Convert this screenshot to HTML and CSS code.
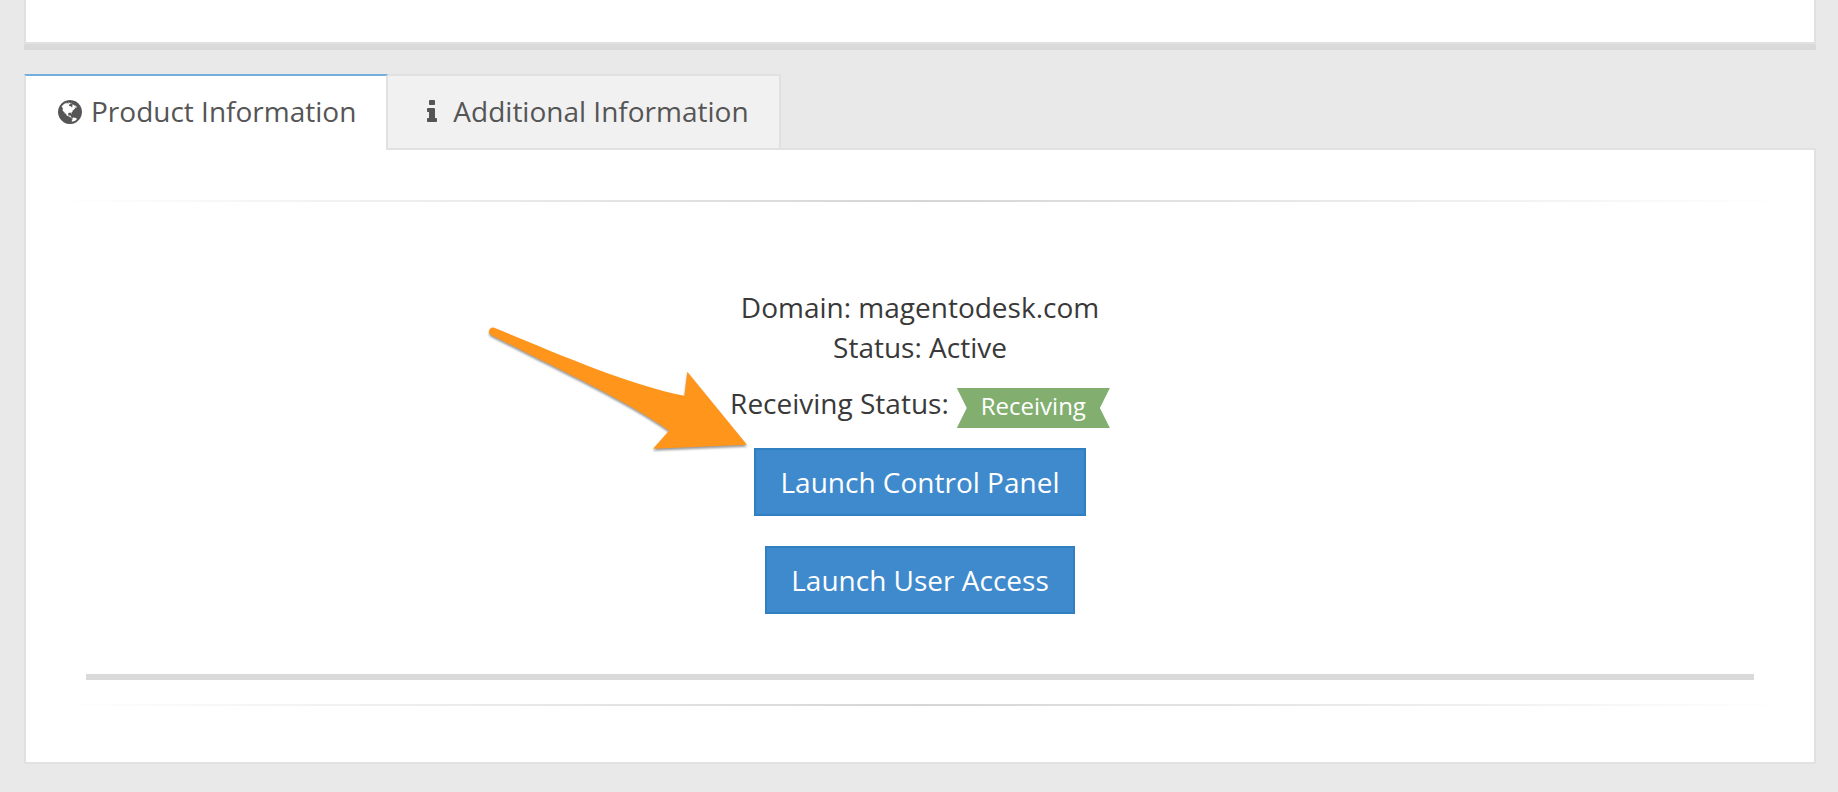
FILE: index.html
```html
<!DOCTYPE html>
<html lang="en">
<head>
<meta charset="utf-8">
<meta name="viewport" content="width=device-width, initial-scale=1">
<title>Product Information</title>
<link rel="stylesheet" href="styles.css">
</head>
<body>
<main class="page">
  <section class="summary-panel" aria-label="Summary"></section>

  <div class="tabs" role="tablist">
    <button class="tab tab-active" id="tab-product" type="button" role="tab" aria-selected="true" aria-controls="product">
      <svg class="icon icon-globe" viewBox="128 128 1536 1536" aria-hidden="true"><path d="M896 128q209 0 385.500 103t279.500 279.500 103 385.500-103 385.500-279.500 279.500-385.500 103-385.500-103-279.500-279.500-103-385.500 103-385.500 279.500-279.500 385.500-103zm274 521q-2 1-9.500 9.500t-13.500 9.500q2 0 4.500-5t5-11 3.500-7q6-7 22-15 14-6 52-12 34-8 51 11-2-2 9.500-13t14.500-12q3-2 15-4.500t15-7.500l2-22q-12 1-17.500-7t-6.500-21q0 2-6 8 0-7-4.500-8t-11.500 1-9 1q-10-3-15-7.500t-8-16.500-4-15q-2-5-9.500-11t-9.500-10q-1-2-2.500-5.500t-3-6.500-4-5.500-5.500-2.500-7 5-7.500 10-4.500 5q-3-2-6-1.500t-4.500 1-4.500 3-5 3.500q-3 2-8.500 3t-8.500 2q15-5-1-11-10-4-16-3 9-4 7.500-12t-8.500-14h5q-1-4-8.500-8.500t-17.500-8.500-13-6q-8-5-34-9.500t-33-.5q-5 6-4.500 10.500t4 14 3.500 12.500q1 6-5.500 13t-6.500 12q0 7 14 15.500t10 21.500q-3 8-16 16t-16 12q-5 8-1.500 18.500t10.500 16.500q2 2 1.500 4t-3.500 4.500-5.500 4-6.500 3.500l-3 2q-11 5-20.500-6t-13.500-26q-7-25-16-30-23-8-29 1-5-13-41-26-25-9-58-4 6-1 0-15-7-15-19-12 3-6 4-17.500t1-13.500q3-13 12-23 1-1 7-8.500t9.500-13.500.5-6q35 4 50-11 5-5 11.500-17t10.500-17q9-6 14-5.500t14.500 5.500 14.500 5q14 1 15.500-11t-7.500-20q12 1 3-17-4-7-8-9-12-4-27 5-8 4 2 8-1-1-9.500 10.500t-16.500 17.500-16-5q-1-1-5.500-13.500t-9.500-13.500q-8 0-16 15 3-8-11-15t-24-8q19-12-8-27-7-4-20.500-5t-19.500 4q-5 7-5.500 11.500t5 8 10.500 5.500 11.500 4 8.500 3q14 10 8 14-2 1-8.500 3.500t-11.500 4.500-6 4q-3 4 0 14t-2 14q-5-5-9-17.500t-7-16.500q7 9-25 6l-10-1q-4 0-16 2t-20.500 1-13.500-8q-4-8 0-20 1-4 4-2-4-3-11-9.500t-10-8.500q-46 15-94 41 6 1 12-1 5-2 13-6.500t10-5.500q34-14 42-7l5-5q14 16 20 25-7-4-30-1-20 6-22 12 7 12 5 18-4-3-11.500-10t-14.500-11-15-5q-16 0-22 1-146 80-235 222 7 7 12 8 4 1 5 9t2.500 11 11.500-3q9 8 3 19 1-1 44 27 19 17 21 21 3 11-10 18-1-2-9-9t-9-4q-3 5 .5 18.500t10.500 12.500q-7 0-9.500 16t-2.500 35.500-1 23.500l2 1q-3 12 5.500 34.500t21.500 19.500q-13 3 20 43 6 8 8 9 3 2 12 7.500t15 10 10 10.500q4 5 10 22.500t14 23.500q-2 6 9.500 20t10.500 23q-1 0-2.500 1t-2.500 1q3 7 15.500 14t15.500 13q1 3 2 10t3 11 8 2q2-20-24-62-15-25-17-29-3-5-5.500-15.500t-4.500-14.500q2 0 6 1.500t8.500 3.500 7.500 4 2 3q-3 7 2 17.500t12 18.500 17 19 12 13q6 6 14 19.500t0 13.500q9 0 20 10.500t17 19.500q5 8 8 26t5 24q2 7 8.500 13.500t12.500 9.500l16 8 13 7q5 2 18.500 10.500t21.500 11.500q10 4 16 4t14.500-2.500 13.500-3.500q15-2 29 15t21 21q36 19 55 11-2 1 .5 7.500t8 15.500 9 14.500 5.500 8.500q5 6 18 15t18 15q6-4 7-9-3 8 7 20t18 10q14-3 14-32-31 15-49-18 0-1-2.500-5.500t-4-8.500-2.500-8.500 0-7.500 5-3q9 0 10-3.500t-2-12.500-4-13q-1-8-11-20t-12-15q-5 9-16 8t-16-9q0 1-1.500 5.500t-1.500 6.500q-13 0-15-1 1-3 2.500-17.500t3.500-22.500q1-4 5.500-12t7.500-14.500 4-12.500-4.500-9.500-17.500-2.500q-19 1-26 20-1 3-3 10.500t-5 11.500-9 7q-7 3-24 2t-24-5q-13-8-22.500-29t-9.500-37q0-10 2.500-26.500t3-25-5.500-24.500q3-2 9-9.500t10-10.500q2-1 4.500-1.500t4.500 0 4-1.500 3-6q-1-1-4-3-3-3-4-3 7 3 28.500-1.500t27.500 1.500q15 11 22-2 0-1-2.500-9.500t-.5-13.500q5 27 29 9 3 3 15.500 5t17.500 5q3 2 7 5.500t5.500 4.500 5-.5 8.500-6.500q10 14 12 24 11 40 19 44 7 3 11 2t4.500-9.500 0-14-1.500-12.500l-1-8v-18l-1-8q-15-3-18.500-12t1.500-18.500 15-18.500q1-1 8-3.500t15.500-6.500 12.500-8q21-19 15-35 7 0 11-9-1 0-5-3t-7.500-5-4.500-2q9-5 2-16 5-3 7.500-11t7.500-10q9 12 21 2 7-8 1-16 5-7 20.500-10.500t18.500-9.500q7 2 8-2t1-12 3-12q4-5 15-9t13-5l17-11q3-4 0-4 18 2 31-11 10-11-6-20 3-6-3-9.500t-15-5.500q3-1 11.500-.5t10.500-1.500q15-10-7-16-17-5-43 12zm-163 877q206-36 351-189-3-3-12.500-4.500t-12.500-3.500q-18-7-24-8 1-7-2.500-13t-8-9-12.500-8-11-7q-2-2-7-6t-7-5.500-7.500-4.500-8.500-2-10 1l-3 1q-3 1-5.500 2.500t-5.500 3-4 3 0 2.500q-21-17-36-22-5-1-11-5.500t-10.500-7-10-1.500-11.500 7q-5 5-6 15t-2 13q-7-5 0-17.500t2-18.500q-3-6-10.500-4.500t-12 4.500-11.500 8.500-9 6.500-8.500 5.500-8.500 7.500q-3 4-6 12t-5 11q-2-4-11.500-6.500t-9.500-5.500q2 10 4 35t5 38q7 31-12 48-27 25-29 40-4 22 12 26 0 7-8 20.500t-7 21.500q0 6 2 16z"/></svg>
      <span>Product Information</span>
    </button>
    <button class="tab" id="tab-additional" type="button" role="tab" aria-selected="false">
      <svg class="icon icon-info" viewBox="128 128 1536 1536" aria-hidden="true"><path d="M1216 1344v128q0 26-19 45t-45 19h-512q-26 0-45-19t-19-45v-128q0-26 19-45t45-19h64v-384h-64q-26 0-45-19t-19-45v-128q0-26 19-45t45-19h384q26 0 45 19t19 45v576h64q26 0 45 19t19 45zm-128-1152v192q0 26-19 45t-45 19h-256q-26 0-45-19t-19-45v-192q0-26 19-45t45-19h256q26 0 45 19t19 45z"/></svg>
      <span>Additional Information</span>
    </button>
  </div>

  <section class="tab-panel" id="product" role="tabpanel" aria-labelledby="tab-product">
    <hr class="fade-line">
    <div class="details">
      <p class="line">Domain: magentodesk.com</p>
      <p class="line">Status: Active</p>
      <p class="line receiving">Receiving Status: <span class="ribbon">Receiving</span></p>
      <div class="actions">
        <button class="launch" type="button">Launch Control Panel</button>
        <button class="launch" type="button">Launch User Access</button>
      </div>
      <svg class="pointer" viewBox="0 0 900 480" aria-hidden="true"><path d="M73 53C260 130 480 226 643 257L652 185L831 404L549 416L597 362C470 272 250 170 63 75C52 68 57 49 73 53Z"/></svg>
    </div>
    <hr class="thick-line">
    <hr class="fade-line">
  </section>
</main>
</body>
</html>
```
FILE: styles.css
```css
* {
  box-sizing: border-box;
}

body {
  margin: 0;
  background: #e9e9e9;
  color: #393939;
  font-family: "Open Sans", sans-serif;
  font-size: 28px;
  line-height: 40px;
}

.page {
  padding: 0 22px 28px 24px;
}

.summary-panel {
  height: 44px;
  margin-bottom: 30px;
  background: #fff;
  border: 2px solid #e1e1e1;
  border-top: 0;
  box-shadow: 0 6px 0 #dadada;
}

.tabs {
  display: flex;
}

.tab {
  display: flex;
  align-items: center;
  gap: 9px;
  margin: 0 0 0 -2px;
  padding: 15px 30px 17px 32px;
  border: 2px solid #e1e1e1;
  border-bottom: 0;
  background: #f1f1f1;
  color: #555;
  font: inherit;
  cursor: pointer;
}

.tab-active {
  z-index: 1;
  margin: 0 0 -2px;
  padding-bottom: 19px;
  border-top-color: #74aedb;
  background: #fff;
}

.icon {
  flex: none;
  width: 24px;
  height: 24px;
  margin-top: 2px;
  fill: #555;
}

.tab-panel {
  padding: 50px 60px 56px;
  background: #fff;
  border: 2px solid #e1e1e1;
}

.fade-line {
  height: 2px;
  margin: 0 -30px;
  border: 0;
  background: linear-gradient(to right, transparent, #d5d5d5, transparent);
}

.thick-line {
  height: 6px;
  margin: 60px 0 24px;
  border: 0;
  background: #dadada;
}

.details {
  position: relative;
  display: flex;
  flex-direction: column;
  align-items: center;
  margin-top: 85px;
}

.line {
  margin: 0;
}

.receiving {
  display: flex;
  gap: 8px;
  margin-top: 16px;
}

.ribbon {
  height: 40px;
  margin-top: 5px;
  padding: 0 24px;
  background: #82af6f;
  clip-path: polygon(0 0, 100% 0, calc(100% - 10px) 50%, 100% 100%, 0 100%, 10px 50%);
  color: #fff;
  font-size: 24px;
  line-height: 36px;
}

.actions {
  display: flex;
  flex-direction: column;
  align-items: center;
  gap: 30px;
  margin-top: 20px;
}

.launch {
  padding: 12px 24px;
  border: 2px solid #307fc1;
  background: #3f8acd;
  color: #fff;
  font: inherit;
  cursor: pointer;
}

.pointer {
  position: absolute;
  top: 23px;
  right: calc(50% + 150px);
  width: 300px;
  height: 160px;
  fill: #ff951b;
  filter: drop-shadow(0 2px 1px rgba(0, 0, 0, 0.4));
  pointer-events: none;
}
```
